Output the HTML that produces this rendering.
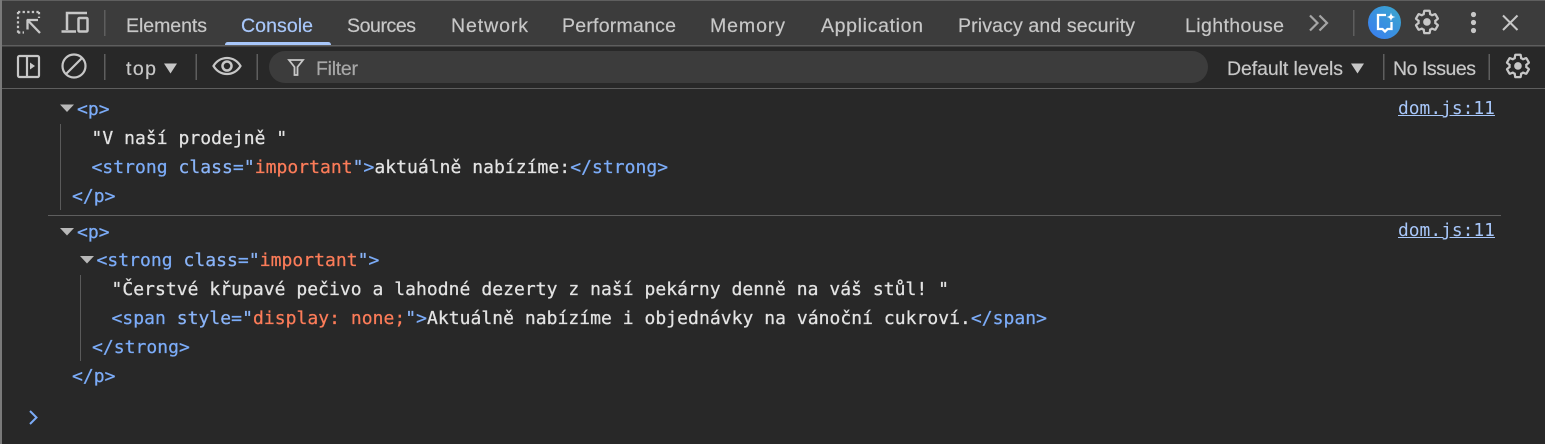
<!DOCTYPE html>
<html><head><meta charset="utf-8">
<style>
html,body{margin:0;padding:0;background:#282828}
body{width:1545px;height:444px;overflow:hidden;position:relative}
svg{position:absolute;left:0;top:0}
.ui{font-family:"Liberation Sans",sans-serif;font-size:19.5px;fill:#c7c7c7;stroke:#c7c7c7;stroke-width:.2px}
.l{position:absolute;margin:0;font:18px/24px "DejaVu Sans Mono","Liberation Mono",monospace;letter-spacing:.04px;white-space:pre;color:#e3e3e3;-webkit-text-stroke:.25px currentColor}
.t{color:#7cacf8}.a{color:#8ab4f8}.v{color:#fc7c59}
.lnk{position:absolute;left:1398px;font:17.9px/24px "DejaVu Sans Mono",monospace;color:#a8c7fa;text-decoration:underline}
</style></head><body>
<svg width="1545" height="444" viewBox="0 0 1545 444">
<defs><linearGradient id="g" x1="0" y1="1" x2="1" y2="0"><stop offset="0" stop-color="#3a7cf2"/><stop offset="1" stop-color="#3aa8cc"/></linearGradient>
<path id="gear" d="M19.43 12.98c.04-.32.07-.64.07-.98s-.03-.66-.07-.98l2.11-1.65c.19-.15.24-.42.12-.64l-2-3.46c-.12-.22-.39-.3-.61-.22l-2.49 1c-.52-.4-1.08-.73-1.69-.98l-.38-2.65C14.46 2.18 14.25 2 14 2h-4c-.25 0-.46.18-.49.42l-.38 2.65c-.61.25-1.17.59-1.69.98l-2.49-1c-.23-.09-.49 0-.61.22l-2 3.46c-.13.22-.07.49.12.64l2.11 1.65c-.04.32-.07.65-.07.98s.03.66.07.98l-2.11 1.65c-.19.15-.24.42-.12.64l2 3.46c.12.22.39.3.61.22l2.49-1c.52.4 1.08.73 1.69.98l.38 2.65c.03.24.24.42.49.42h4c.25 0 .46-.18.49-.42l.38-2.65c.61-.25 1.17-.59 1.69-.98l2.49 1c.23.09.49 0 .61-.22l2-3.46c.12-.22.07-.49-.12-.64l-2.11-1.65z"/></defs>
<rect x="0" y="0" width="1545" height="45" fill="#3c3c3c"/>
<rect x="0" y="0" width="1545" height="1" fill="#5f5f5f"/>
<rect x="0" y="45" width="1545" height="1.5" fill="#5e5e5e"/>
<rect x="0" y="88" width="1545" height="1" fill="#5e5e5e"/>
<rect x="0" y="0" width="2" height="444" fill="#7a7a7a"/>
<rect x="269" y="51" width="939" height="32" rx="16" fill="#3c3c3c"/>
<!-- tabs -->
<g class="ui">
<text x="126" y="32" textLength="81">Elements</text>
<text x="241" y="32" textLength="72" style="fill:#a8c7fa;stroke:#a8c7fa">Console</text>
<text x="347" y="32" textLength="69">Sources</text>
<text x="451" y="32" textLength="77">Network</text>
<text x="562" y="32" textLength="114">Performance</text>
<text x="710" y="32" textLength="75">Memory</text>
<text x="821" y="32" textLength="102">Application</text>
<text x="958" y="32" textLength="177">Privacy and security</text>
<text x="1185" y="32" textLength="99">Lighthouse</text>
<text x="126" y="75" textLength="30">top</text>
<text x="316" y="75" textLength="42" style="fill:#a8a8a8;stroke:#a8a8a8">Filter</text>
<text x="1227" y="75" textLength="116">Default levels</text>
<text x="1393" y="75" textLength="83">No Issues</text>
</g>
<path d="M225 45v-.5a3 3 0 0 1 3-2.500h100a3 3 0 0 1 3 2.500v.5z" fill="#a8c7fa"/>
<!-- separators -->
<g fill="#5e5e5e">
<rect x="104" y="10" width="1.500" height="26"/><rect x="1353" y="10" width="1.500" height="26"/>
<rect x="104" y="54" width="1.500" height="26"/><rect x="195.500" y="54" width="1.500" height="26"/><rect x="256.500" y="54" width="1.500" height="26"/><rect x="1383" y="54" width="1.500" height="26"/><rect x="1488.500" y="54" width="1.500" height="26"/>
</g>
<!-- icons -->
<g fill="none" stroke="#c7c7c7" stroke-width="2.200">
<path d="M18 12h21M18 12v21M39 12v6M18 32.500h6" stroke-dasharray="2.300 2.300"/>
<path d="M27 20h11M27.500 19.500v10M27.500 20 40 33" stroke-width="2.300"/>
<path d="M67 30V13h20M61.500 31.500h14.500" stroke-width="2.500"/>
<rect x="78.500" y="18" width="9" height="13.500" rx="1" stroke-width="2.500"/>
<rect x="18" y="56" width="21" height="21" rx="1.500"/><path d="M27 56v21"/>
<circle cx="74" cy="66" r="11.500"/><path d="M66 74 82 58"/>
<path d="M213.500 66c3-5 8-8 13.500-8s10.500 3 13.500 8c-3 5-8 8-13.500 8s-10.500-3-13.500-8z"/>
<circle cx="227" cy="66" r="4.500" stroke-width="2.500"/>
<path d="M289 60h14l-5.500 7v8h-3v-8z" stroke-width="1.800"/>
<path d="M1310 15.500l7.500 7.500-7.500 7.500M1319.500 15.500l7.500 7.500-7.500 7.500" stroke="#a5a5a5"/>
<path d="M1503 15.500l14.500 14.500M1517.500 15.500l-14.500 14.500" stroke-width="2"/>
</g>
<path d="M30 62.500v7l5-3.500z" fill="#c7c7c7"/>
<path d="M164 63.500h13l-6.500 10zM1351 63.500h13l-6.500 10z" fill="#c7c7c7"/>
<circle cx="1384.500" cy="22.500" r="16.500" fill="url(#g)"/>
<path d="M1386 15h-8v14h4.500l2.500 2.500 2.500-2.500h4v-7" fill="none" stroke="#fff" stroke-width="2.300"/>
<path d="M1391 12.500c.5 3 1.500 4 4.500 4.500-3 .5-4 1.500-4.500 4.500-.5-3-1.500-4-4.500-4.500 3-.5 4-1.500 4.500-4.500z" fill="#fff"/>
<g transform="translate(1413.500 8.500) scale(1.120)" fill="none" stroke="#c7c7c7" stroke-width="2"><use href="#gear"/><circle cx="12" cy="12" r="3.400" fill="#c7c7c7" stroke="none"/></g>
<g transform="translate(1504.500 52.500) scale(1.120)" fill="none" stroke="#c7c7c7" stroke-width="2"><use href="#gear"/><circle cx="12" cy="12" r="3.400" fill="#c7c7c7" stroke="none"/></g>
<circle cx="1473.500" cy="14.500" r="2.600" fill="#c7c7c7"/><circle cx="1473.500" cy="22.500" r="2.600" fill="#c7c7c7"/><circle cx="1473.500" cy="30.500" r="2.600" fill="#c7c7c7"/>
<!-- console decorations -->
<rect x="48" y="215" width="1453" height="1" fill="#5e5e5e"/>
<path d="M60 104.500h14l-7 7.500zM60 228h14l-7 7.500zM80 256h14l-7 7.500z" fill="#b8b8b8"/>
<g fill="#5a5a5a"><rect x="60" y="124" width="1" height="86"/><rect x="80" y="275" width="1" height="86"/></g>
<path d="M30 411l6.500 6.500L30 424" fill="none" stroke="#7cacf8" stroke-width="2"/>
</svg>
<pre class="l t" style="left:77px;top:98px">&lt;p&gt;</pre>
<pre class="l" style="left:91.500px;top:127px">"V naší prodejně "</pre>
<pre class="l" style="left:91.500px;top:156px"><span class="t">&lt;strong</span> <span class="a">class</span><span class="t">=</span><span class="a">"</span><span class="v">important</span><span class="a">"</span><span class="t">&gt;</span>aktuálně nabízíme:<span class="t">&lt;/strong&gt;</span></pre>
<pre class="l t" style="left:72px;top:185px">&lt;/p&gt;</pre>
<pre class="l t" style="left:77px;top:221px">&lt;p&gt;</pre>
<pre class="l" style="left:96.500px;top:249px"><span class="t">&lt;strong</span> <span class="a">class</span><span class="t">=</span><span class="a">"</span><span class="v">important</span><span class="a">"</span><span class="t">&gt;</span></pre>
<pre class="l" style="left:111.500px;top:278px">"Čerstvé křupavé pečivo a lahodné dezerty z naší pekárny denně na váš stůl! "</pre>
<pre class="l" style="left:111.500px;top:307px"><span class="t">&lt;span</span> <span class="a">style</span><span class="t">=</span><span class="a">"</span><span class="v">display: none;</span><span class="a">"</span><span class="t">&gt;</span>Aktuálně nabízíme i objednávky na vánoční cukroví.<span class="t">&lt;/span&gt;</span></pre>
<pre class="l t" style="left:92px;top:336px">&lt;/strong&gt;</pre>
<pre class="l t" style="left:72px;top:365px">&lt;/p&gt;</pre>
<div class="lnk" style="top:97px">dom.js:11</div>
<div class="lnk" style="top:219px">dom.js:11</div>
</body></html>
